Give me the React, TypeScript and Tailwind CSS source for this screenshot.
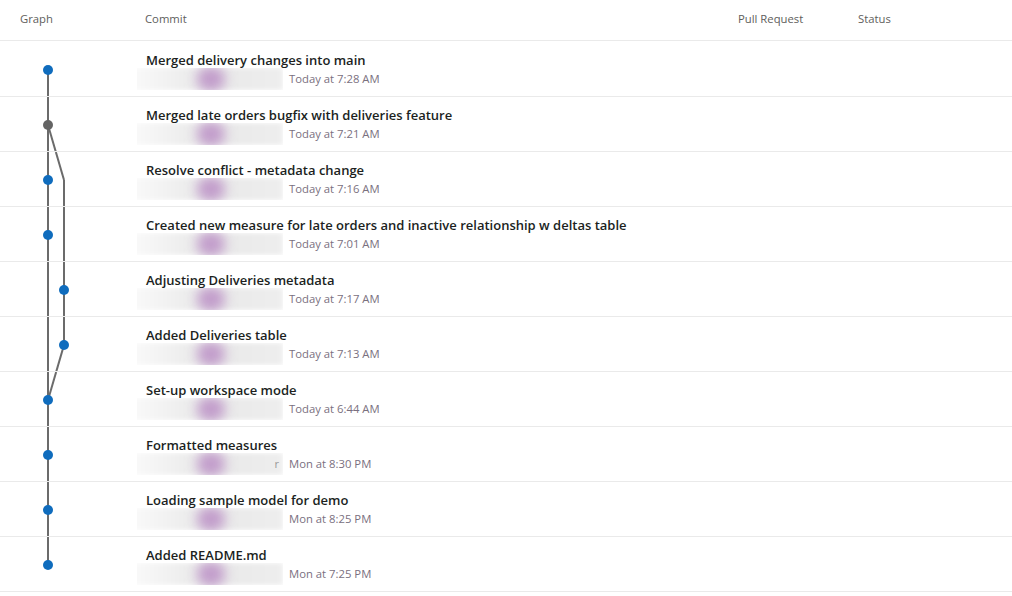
import type { ReactElement } from 'react';

type Seg = [number, number, number, number];

interface Commit {
  message: string;
  time: string;
  dot: [number, 'blue' | 'gray'];
  lines: Seg[];
  stray?: boolean;
}

const L1 = 48;
const L2 = 64;
const C = 28;
const H = 55;
const D1 = L1 + (L2 - L1) * ((H - C) / H);
const D2 = L2 - (L2 - L1) * ((H - C) / H);

const commits: Commit[] = [
  { message: 'Merged delivery changes into main', time: 'Today at 7:28 AM', dot: [L1, 'blue'], lines: [[L1, C, L1, H]] },
  {
    message: 'Merged late orders bugfix with deliveries feature',
    time: 'Today at 7:21 AM',
    dot: [L1, 'gray'],
    lines: [[L1, 0, L1, H], [L1, C, D1, H]],
  },
  {
    message: 'Resolve conflict - metadata change',
    time: 'Today at 7:16 AM',
    dot: [L1, 'blue'],
    lines: [[L1, 0, L1, H], [D1, 0, L2, C], [L2, C, L2, H]],
  },
  {
    message: 'Created new measure for late orders and inactive relationship w deltas table',
    time: 'Today at 7:01 AM',
    dot: [L1, 'blue'],
    lines: [[L1, 0, L1, H], [L2, 0, L2, H]],
  },
  {
    message: 'Adjusting Deliveries metadata',
    time: 'Today at 7:17 AM',
    dot: [L2, 'blue'],
    lines: [[L1, 0, L1, H], [L2, 0, L2, H]],
  },
  {
    message: 'Added Deliveries table',
    time: 'Today at 7:13 AM',
    dot: [L2, 'blue'],
    lines: [[L1, 0, L1, H], [L2, 0, L2, C], [L2, C, D2, H]],
  },
  {
    message: 'Set-up workspace mode',
    time: 'Today at 6:44 AM',
    dot: [L1, 'blue'],
    lines: [[L1, 0, L1, H], [D2, 0, L1, C]],
  },
  { message: 'Formatted measures', time: 'Mon at 8:30 PM', dot: [L1, 'blue'], lines: [[L1, 0, L1, H]], stray: true },
  { message: 'Loading sample model for demo', time: 'Mon at 8:25 PM', dot: [L1, 'blue'], lines: [[L1, 0, L1, H]] },
  { message: 'Added README.md', time: 'Mon at 7:25 PM', dot: [L1, 'blue'], lines: [[L1, 0, L1, C]] },
];

function Graph({ commit }: { commit: Commit }): ReactElement {
  return (
    <svg width="136" height="54" viewBox="0 0 136 54" className="shrink-0">
      {commit.lines.map(([x1, y1, x2, y2], i) => (
        <line key={i} x1={x1} y1={y1} x2={x2} y2={y2} stroke="#6b6b6b" strokeWidth="2" />
      ))}
      <circle cx={commit.dot[0]} cy={C} r="5" fill={commit.dot[1] === 'blue' ? '#0f6cbd' : '#646464'} />
    </svg>
  );
}

function Author({ stray }: { stray?: boolean }): ReactElement {
  return (
    <div className="relative -ml-[9px] h-[22px] w-[146px] shrink-0 overflow-hidden">
      <div className="absolute inset-y-0 left-[-6px] right-[0px] bg-gradient-to-r from-[#fafafa] via-[#e8e8e8] to-[#eeeeee] blur-[2px]" />
      <div className="absolute left-[60px] top-[-1px] h-[24px] w-[28px] rounded-full bg-[#c29dcb] blur-[6px]" />
      {stray && <span className="absolute right-[4px] top-[3px] text-[11px] text-[#999]">r</span>}
    </div>
  );
}

export default function App(): ReactElement {
  return (
    <div className="h-[596px] w-[1012px] overflow-hidden bg-white font-['Segoe_UI','Open_Sans',sans-serif] text-[#201f1e]">
      <div className="flex h-[41px] items-center border-b border-[#eaeaea] pb-[2px] text-[11.3px] text-[#605e5c]">
        <div className="w-[145px] pl-[20px]">Graph</div>
        <div className="w-[593px]">Commit</div>
        <div className="w-[120px]">Pull Request</div>
        <div>Status</div>
      </div>
      <div className="pt-px">
        {commits.map((c) => (
          <div key={c.message} className="flex h-[55px] border-b border-[#eaeaea]">
            <div className="w-[146px] shrink-0">
              <Graph commit={c} />
            </div>
            <div className="pt-[8px]">
              <div className="pt-px text-[13px] font-semibold leading-[18px]">{c.message}</div>
              <div className="-mt-px flex items-center">
                <Author stray={c.stray} />
                <span className="ml-[6px] text-[11.3px] leading-[20px] text-[#7a7080]">{c.time}</span>
              </div>
            </div>
          </div>
        ))}
      </div>
    </div>
  );
}
